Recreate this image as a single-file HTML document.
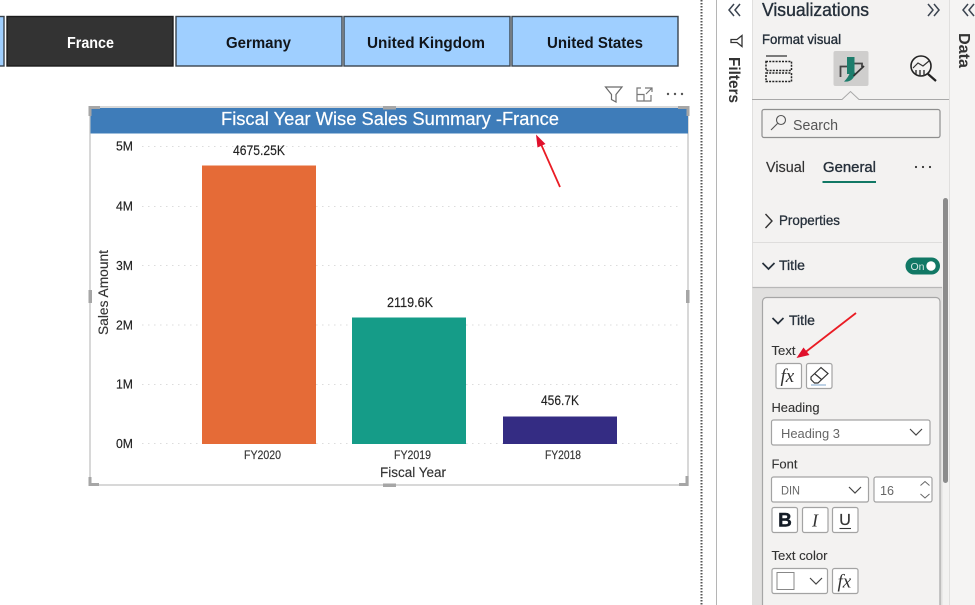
<!DOCTYPE html>
<html><head><meta charset="utf-8"><style>
html,body{margin:0;padding:0;background:#fff;width:975px;height:605px;overflow:hidden}
svg{display:block;filter:blur(.35px)}
text{font-family:"Liberation Sans",sans-serif}
</style></head><body>
<svg width="975" height="605" viewBox="0 0 975 605" xmlns="http://www.w3.org/2000/svg">
<rect width="975" height="605" fill="#fff"/>
<g stroke="#3a444e" stroke-width="1.4">
<rect x="-4" y="16.500" width="8" height="49.500" fill="#9fcfff"/>
<rect x="7" y="16.500" width="166" height="49.500" fill="#333333" stroke="#1c1c1c"/>
<rect x="176" y="16.500" width="166" height="49.500" fill="#9fcfff"/>
<rect x="344" y="16.500" width="166" height="49.500" fill="#9fcfff"/>
<rect x="512" y="16.500" width="166" height="49.500" fill="#9fcfff"/>
</g>
<g font-size="15.500" font-weight="700" fill="#11151a">
<text x="67" y="48" textLength="47" lengthAdjust="spacingAndGlyphs" fill="#fff">France</text>
<text x="226" y="48" textLength="65" lengthAdjust="spacingAndGlyphs">Germany</text>
<text x="367" y="48" textLength="118" lengthAdjust="spacingAndGlyphs">United Kingdom</text>
<text x="547" y="48" textLength="96" lengthAdjust="spacingAndGlyphs">United States</text>
</g>

<!-- visual header icons -->
<path d="M605.500 87H622L616 94.500V102L611.500 99.500V94.500Z" fill="none" stroke="#6b6b6b" stroke-width="1.200"/>
<path d="M641 88H637V101H651V95M637 94.500H644V101M645 88H652V92M652 88L646 94" fill="none" stroke="#777" stroke-width="1.200"/>
<g fill="#555"><circle cx="668" cy="94" r="1.200"/><circle cx="675" cy="94" r="1.200"/><circle cx="682" cy="94" r="1.200"/></g>

<!-- visual frame -->
<rect x="90" y="107" width="598" height="378" fill="#fff" stroke="#cbcbcb" stroke-width="1.500"/>
<rect x="90.500" y="108" width="597.500" height="25.500" fill="#3e7cb9"/>
<text x="221" y="125" font-size="18.500" fill="#fff" stroke="#fff" stroke-width=".2" textLength="338" lengthAdjust="spacingAndGlyphs">Fiscal Year Wise Sales Summary -France</text>
<!-- handles -->
<g fill="none" stroke="#a6a6a6" stroke-width="3">
<path d="M90 116V107.500H100"/><path d="M678 107.500H688V116"/><path d="M90 477V484.500H99"/><path d="M679 484.500H687V476"/>
</g>
<g fill="#a6a6a6">
<rect x="383" y="106" width="13" height="3.500"/><rect x="383" y="483.500" width="13" height="3.500"/>
<rect x="88.500" y="290" width="3.500" height="13"/><rect x="686" y="290" width="3.500" height="13"/>
</g>

<!-- gridlines -->
<g stroke="#dcdcdc" stroke-width="1" stroke-dasharray="1.500 4.500">
<path d="M142 146.500H680M142 206.500H680M142 265.500H680M142 325H680M142 384.500H680M142 443.500H680"/>
</g>
<rect x="202" y="165.500" width="114" height="278.500" fill="#e56b37"/>
<rect x="352" y="317.500" width="114" height="126.500" fill="#159c88"/>
<rect x="503" y="416.500" width="114" height="27.500" fill="#342c83"/>
<g font-size="13" fill="#222" stroke="#222" stroke-width=".15">
<text x="116" y="150.500" textLength="17" lengthAdjust="spacingAndGlyphs">5M</text>
<text x="116" y="210.500" textLength="17" lengthAdjust="spacingAndGlyphs">4M</text>
<text x="116" y="270" textLength="17" lengthAdjust="spacingAndGlyphs">3M</text>
<text x="116" y="329.500" textLength="17" lengthAdjust="spacingAndGlyphs">2M</text>
<text x="116" y="388.500" textLength="17" lengthAdjust="spacingAndGlyphs">1M</text>
<text x="116" y="448" textLength="17" lengthAdjust="spacingAndGlyphs">0M</text>
<text x="233" y="155" textLength="52" lengthAdjust="spacingAndGlyphs" font-size="13.500">4675.25K</text>
<text x="387" y="307" textLength="46" lengthAdjust="spacingAndGlyphs" font-size="13.500">2119.6K</text>
<text x="541" y="405" textLength="38" lengthAdjust="spacingAndGlyphs" font-size="13.500">456.7K</text>
</g>
<g font-size="12" fill="#333" stroke="#333" stroke-width=".15">
<text x="244" y="459" textLength="37" lengthAdjust="spacingAndGlyphs">FY2020</text>
<text x="394" y="459" textLength="37" lengthAdjust="spacingAndGlyphs">FY2019</text>
<text x="545" y="459" textLength="36" lengthAdjust="spacingAndGlyphs">FY2018</text>
</g>
<text x="380" y="477" font-size="13.500" fill="#333" stroke="#333" stroke-width=".15" textLength="66" lengthAdjust="spacingAndGlyphs">Fiscal Year</text>
<text transform="translate(108 335) rotate(-90)" font-size="13.500" fill="#333" stroke="#333" stroke-width=".15" textLength="85" lengthAdjust="spacingAndGlyphs">Sales Amount</text>

<!-- divider + filters strip -->
<path d="M701.500 0V605" stroke="#555" stroke-width="2" stroke-dasharray="1.500 1.500"/>
<path d="M716.500 0V605" stroke="#b5b5b5" stroke-width="1"/>
<rect x="717" y="0" width="35" height="605" fill="#fff"/>
<path d="M734 4L729 10L734 16M740 4L735 10L740 16" fill="none" stroke="#3b4450" stroke-width="1.500"/>
<path d="M742 35.500L737 39.500H731V42.500H737L742 46.500Z" fill="none" stroke="#333" stroke-width="1.300"/>
<text transform="translate(729 57) rotate(90)" font-size="16" font-weight="700" fill="#333" textLength="46" lengthAdjust="spacingAndGlyphs">Filters</text>

<!-- viz pane -->
<rect x="752" y="0" width="197" height="605" fill="#f3f2f1"/>
<path d="M752.500 0V605" stroke="#e0dfde"/>
<rect x="949" y="0" width="26" height="605" fill="#f5f4f3"/>
<path d="M949.500 0V605" stroke="#e0dfde"/>
<text x="762" y="16" font-size="18" fill="#252f3a" stroke="#252f3a" stroke-width=".35" textLength="107" lengthAdjust="spacingAndGlyphs">Visualizations</text>
<path d="M928 4L933 10L928 16M934 4L939 10L934 16" fill="none" stroke="#3b4450" stroke-width="1.500"/>
<path d="M968 4L963 10L968 16M974 4L969 10L974 16" fill="none" stroke="#3b4450" stroke-width="1.500"/>
<text transform="translate(959 33) rotate(90)" font-size="16" font-weight="700" fill="#333" textLength="35" lengthAdjust="spacingAndGlyphs">Data</text>
<text x="762" y="44" font-size="13.500" fill="#252f3a" stroke="#252f3a" stroke-width=".35" textLength="79" lengthAdjust="spacingAndGlyphs">Format visual</text>

<!-- tab icons -->
<path d="M766 56H787" stroke="#333" stroke-width="1.300"/>
<g fill="none" stroke="#222" stroke-width="1.500" stroke-dasharray="2 1.200">
<rect x="766" y="61.500" width="25.500" height="9"/><rect x="766" y="73" width="25.500" height="8.500"/>
</g>
<rect x="833.500" y="51" width="35" height="35" rx="2" fill="#cfcecd"/>
<path d="M840.500 77V66.500H847M854 63.500H862V67" fill="none" stroke="#444" stroke-width="1.800"/>
<rect x="847" y="57" width="7.500" height="17" fill="#1d7d6c"/>
<path d="M844 81.500C851 82.500 854 78 855.500 73L851 71C849 75 847 79 844 81.500Z" fill="#1d7d6c"/>
<path d="M853.500 76L864 66" stroke="#333" stroke-width="1.800"/>
<circle cx="921" cy="66" r="10" fill="none" stroke="#222" stroke-width="1.600"/>
<path d="M928 74L936 81" stroke="#222" stroke-width="2.200"/>
<path d="M913 68L918 63L923 66L929 61" fill="none" stroke="#333" stroke-width="1.200"/>
<path d="M916 70V74M920 70V76M924 70V76" stroke="#333" stroke-width="1.400"/>
<path d="M752 99.500H842L850.500 91.500L859 99.500H949" fill="#f3f2f1" stroke="#a8a8a8" stroke-width="1"/>

<!-- search -->
<rect x="762" y="109.500" width="178" height="28" rx="2" fill="#f3f2f1" stroke="#8e8e8e" stroke-width="1.200"/>
<circle cx="781" cy="120" r="4.500" fill="none" stroke="#555" stroke-width="1.100"/>
<path d="M777.500 123.500L771 130" stroke="#555" stroke-width="1.100"/>
<text x="793" y="130" font-size="14.500" fill="#555" textLength="45" lengthAdjust="spacingAndGlyphs">Search</text>

<!-- tabs -->
<text x="766" y="172" font-size="14.500" fill="#333" stroke="#333" stroke-width=".15" textLength="39" lengthAdjust="spacingAndGlyphs">Visual</text>
<text x="823" y="172" font-size="14.500" fill="#252f3a" stroke="#252f3a" stroke-width=".35" textLength="53" lengthAdjust="spacingAndGlyphs">General</text>
<rect x="822.500" y="181" width="53.500" height="2" fill="#117865"/>
<g fill="#333"><circle cx="916" cy="167" r="1.100"/><circle cx="923" cy="167" r="1.100"/><circle cx="930" cy="167" r="1.100"/></g>

<!-- properties -->
<path d="M765.500 214L772 221L765.500 228" fill="none" stroke="#333" stroke-width="1.400"/>
<text x="779" y="225" font-size="14" fill="#252f3a" stroke="#252f3a" stroke-width=".3" textLength="61" lengthAdjust="spacingAndGlyphs">Properties</text>
<path d="M752 242.500H942" stroke="#dedddc" stroke-width="1"/>
<path d="M762.500 263L768.500 269L774.500 263" fill="none" stroke="#252f3a" stroke-width="1.700"/>
<text x="779" y="270" font-size="14" fill="#252f3a" stroke="#252f3a" stroke-width=".3" textLength="26" lengthAdjust="spacingAndGlyphs">Title</text>
<rect x="905.500" y="257.500" width="34.500" height="17" rx="8.500" fill="#117865"/>
<text x="910.500" y="270" font-size="10.500" fill="#d5e8e3" textLength="14" lengthAdjust="spacingAndGlyphs">On</text>
<circle cx="931" cy="266" r="4.700" fill="#fff"/>
<rect x="752.500" y="287" width="190" height="318" fill="#e1e0df"/>
<path d="M752.500 287.500H942" stroke="#b8b8b8" stroke-width="1.200"/>
<rect x="762.500" y="297.500" width="177.500" height="320" rx="4" fill="#f3f2f1" stroke="#a6a6a6" stroke-width="1.200"/>
<rect x="943" y="198" width="5" height="285" rx="2.500" fill="#8c8c8c"/>

<!-- title card -->
<path d="M772.500 318L778 323.500L783.500 318" fill="none" stroke="#252f3a" stroke-width="1.700"/>
<text x="789" y="325" font-size="14" fill="#252f3a" stroke="#252f3a" stroke-width=".3" textLength="26" lengthAdjust="spacingAndGlyphs">Title</text>
<text x="771.500" y="355" font-size="13" fill="#333" stroke="#333" stroke-width=".12" textLength="24" lengthAdjust="spacingAndGlyphs">Text</text>
<g fill="#fff" stroke="#a3a3a3" stroke-width="1.200">
<rect x="776" y="363.500" width="25.500" height="25" rx="2"/>
<rect x="806.500" y="363.500" width="25.500" height="25" rx="2"/>
</g>
<text x="780.500" y="382" font-size="19" font-style="italic" fill="#333" style="font-family:'Liberation Serif',serif">fx</text>
<path d="M811 377L821 367.500L828 373.500L818 383H814.500L811 379.500ZM814.500 373.500L821.500 379.500" fill="none" stroke="#333" stroke-width="1.200"/>
<path d="M811 385H826" stroke="#5b8fc0" stroke-width=".8"/>

<text x="771.500" y="412" font-size="13" fill="#333" stroke="#333" stroke-width=".12" textLength="48" lengthAdjust="spacingAndGlyphs">Heading</text>
<rect x="771.500" y="420" width="158.500" height="25" rx="2" fill="#fff" stroke="#a3a3a3" stroke-width="1.200"/>
<text x="781" y="438" font-size="13" fill="#666" textLength="59" lengthAdjust="spacingAndGlyphs">Heading 3</text>
<path d="M910 429L916 435L922 429" fill="none" stroke="#444" stroke-width="1.200"/>

<text x="771.500" y="468.500" font-size="13" fill="#333" stroke="#333" stroke-width=".12" textLength="26" lengthAdjust="spacingAndGlyphs">Font</text>
<rect x="771.500" y="477" width="97" height="25" rx="2" fill="#fff" stroke="#a3a3a3" stroke-width="1.200"/>
<text x="781" y="494.500" font-size="11.500" fill="#666" textLength="19" lengthAdjust="spacingAndGlyphs">DIN</text>
<path d="M849 487L855 493L861 487" fill="none" stroke="#444" stroke-width="1.200"/>
<rect x="874" y="477" width="58" height="25" rx="2" fill="#fff" stroke="#a3a3a3" stroke-width="1.200"/>
<text x="880" y="495" font-size="13" fill="#666" textLength="14" lengthAdjust="spacingAndGlyphs">16</text>
<path d="M920.500 485.500L925 481.500L929.500 485.500M920.500 494L925 498L929.500 494" fill="none" stroke="#666" stroke-width="1"/>

<g fill="#fff" stroke="#a3a3a3" stroke-width="1.200">
<rect x="772" y="507.500" width="25.500" height="25" rx="2"/>
<rect x="802.500" y="507.500" width="25.500" height="25" rx="2"/>
<rect x="832.500" y="507.500" width="25.500" height="25" rx="2"/>
</g>
<text x="785" y="526.500" text-anchor="middle" font-size="19" font-weight="700" fill="#141c26" stroke="#141c26" stroke-width=".4">B</text>
<text x="815" y="526.500" text-anchor="middle" font-size="18" font-style="italic" fill="#333" style="font-family:'Liberation Serif',serif">I</text>
<text x="845" y="525" text-anchor="middle" font-size="16" fill="#333" stroke="#333" stroke-width=".2">U</text>
<path d="M839.500 528.500H851" stroke="#333" stroke-width="1.100"/>

<text x="771.500" y="560" font-size="13" fill="#333" stroke="#333" stroke-width=".12" textLength="56" lengthAdjust="spacingAndGlyphs">Text color</text>
<rect x="772" y="568.500" width="55.500" height="25" rx="2" fill="#fff" stroke="#a3a3a3" stroke-width="1.200"/>
<rect x="777" y="572.500" width="17" height="17" fill="#fff" stroke="#888" stroke-width="1"/>
<path d="M810 578L816 584L822 578" fill="none" stroke="#444" stroke-width="1.200"/>
<rect x="832.500" y="568.500" width="25.500" height="25" rx="2" fill="#fff" stroke="#a3a3a3" stroke-width="1.200"/>
<text x="837.500" y="587.500" font-size="19" font-style="italic" fill="#333" style="font-family:'Liberation Serif',serif">fx</text>

<!-- red arrows -->
<path d="M560 187L540.500 143" stroke="#ea1c24" stroke-width="1.800"/>
<path d="M536 134.500L545.500 144L537.500 147.500Z" fill="#e0102c"/>
<path d="M856 313L803 354" stroke="#ea1c24" stroke-width="1.800"/>
<path d="M796.500 358L803.500 347.500L809.500 355Z" fill="#e0102c"/>
</svg>
</body></html>
